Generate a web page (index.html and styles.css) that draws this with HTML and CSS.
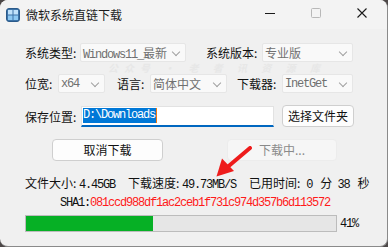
FILE: index.html
```html
<!DOCTYPE html>
<html lang="zh-CN">
<head>
<meta charset="utf-8">
<title>微软系统直链下载</title>
<link rel="stylesheet" href="styles.css">
</head>
<body>
<div class="window">
  <div class="titlebar">
    <svg class="appicon" width="14" height="14" viewBox="0 0 14 14">
      <rect x="0.5" y="0.5" width="13" height="13" rx="2.5" fill="#3c73a8" stroke="#2b5a8a"/>
      <rect x="2" y="2" width="4.5" height="4.5" fill="#bfe1fb"/>
      <rect x="7.5" y="2" width="4.5" height="4.5" fill="#bfe1fb"/>
      <rect x="2" y="7.5" width="4.5" height="4.5" fill="#8cc8f3"/>
      <rect x="7.5" y="7.5" width="4.5" height="4.5" fill="#8cc8f3"/>
    </svg>
    <span class="title">微软系统直链下载</span>
    <div class="controls">
      <svg class="ctl" width="46" height="29" viewBox="0 0 46 29"><path d="M18 13.5h10" stroke="#1a1a1a" stroke-width="1"/></svg>
      <svg class="ctl" width="46" height="29" viewBox="0 0 46 29"><rect x="18.5" y="8.5" width="9" height="9" rx="1" fill="none" stroke="#b8b8b8"/></svg>
      <svg class="ctl" width="46" height="29" viewBox="0 0 46 29"><path d="M18.5 8.5l9 9M27.5 8.5l-9 9" stroke="#1a1a1a" stroke-width="1.1"/></svg>
    </div>
  </div>
  <div class="content">
    <div class="watermark">公众号 · 老 者 讯 资 源 库</div>
    <div class="row r1">
      <span class="lbl w55">系统类型:</span>
      <div class="combo w106"><span><span class="mono">Windows11_</span>最新</span><i class="chev"></i></div>
      <span class="lbl w56 ml20">系统版本:</span>
      <div class="combo w91"><span>专业版</span><i class="chev"></i></div>
    </div>
    <div class="row r2">
      <span class="lbl w33">位宽:</span>
      <div class="combo w47"><span class="mono">x64</span><i class="chev"></i></div>
      <span class="lbl w33 ml12">语言:</span>
      <div class="combo w77"><span>简体中文</span><i class="chev"></i></div>
      <span class="lbl w45 ml10">下载器:</span>
      <div class="combo w71"><span class="mono">InetGet</span><i class="chev"></i></div>
    </div>
    <div class="row r3">
      <span class="lbl w56">保存位置:</span>
      <div class="input"><span class="sel mono">D:\Downloads</span><span class="caret"></span></div>
      <button class="btn pick">选择文件夹</button>
    </div>
    <div class="row r4">
      <button class="btn cancel">取消下载</button>
      <button class="btn busy" disabled>下载中...</button>
    </div>
    <div class="row info">
      <span class="w103">文件大小: <span class="mono">4.45GB</span></span>
      <span class="w121">下载速度: <span class="mono">49.73MB/S</span></span>
      <span>已用时间:<span class="mono num0">0</span><span class="unit">分</span><span class="mono num1">38</span><span class="unit">秒</span></span>
    </div>
    <div class="row sha">
      <span class="mono">SHA1:</span><span class="mono hash">081ccd988df1ac2ceb1f731c974d357b6d113572</span>
    </div>
    <div class="row prog">
      <div class="bar"><div class="fill" style="width:41%"></div></div>
      <span class="pct mono">41%</span>
    </div>
    <svg class="arrow" width="40" height="36" viewBox="0 0 40 36">
      <path d="M36 2 L10 24" stroke="#ee1c1c" stroke-width="4" stroke-linecap="round"/>
      <path d="M2.5 30.5 L8 12.5 L20 25 Z" fill="#ee1c1c"/>
    </svg>
  </div>
</div>
</body>
</html>
```
FILE: styles.css
```css
html, body {
  margin: 0;
  padding: 0;
}
body {
  width: 388px;
  height: 247px;
  background: #4d4848;
  overflow: hidden;
  font-family: "Noto Sans CJK SC", "Liberation Sans", sans-serif;
  font-size: 12px;
  color: #111;
}
.window {
  width: 387px;
  height: 246px;
  background: #f0f0f0;
  border-radius: 8px;
  overflow: hidden;
  position: relative;
  border-right: 1px solid #8a8a8a;
  border-bottom: 1px solid #8a8a8a;
}
.titlebar {
  height: 29px;
  background: #f3f3f3;
  display: flex;
  align-items: center;
}
.appicon {
  margin-left: 6px;
  margin-top: 1px;
}
.title {
  margin-left: 6px;
  font-size: 12px;
  color: #1b1b1b;
  line-height: 1;
}
.controls {
  margin-left: auto;
  display: flex;
  margin-right: 2px;
}
.ctl {
  display: block;
}
.content {
  position: relative;
  padding-left: 25px;
  padding-top: 14px;
}
.watermark {
  position: absolute;
  left: 108px;
  top: 34px;
  height: 10px;
  font-size: 10px;
  line-height: 10px;
  font-weight: bold;
  font-style: italic;
  color: #e7e7e7;
  letter-spacing: 6px;
  white-space: nowrap;
  z-index: 0;
}
.row {
  display: flex;
  align-items: center;
  position: relative;
  white-space: nowrap;
  z-index: 1;
}
.r1 { height: 19px; }
.r2 { height: 19px; margin-top: 12px; }
.r3 { height: 22px; margin-top: 12px; }
.r4 { height: 22px; margin-top: 12px; }
.info { height: 16px; margin-top: 14px; }
.sha { height: 14px; margin-top: 5px; padding-left: 35px; }
.prog { height: 17px; margin-top: 5px; }
.lbl {
  display: inline-block;
  line-height: 19px;
}
.mono {
  font-family: "Liberation Mono", "DejaVu Sans Mono", monospace;
  letter-spacing: -1.2px;
}
.num0 { margin-left: 6px; }
.unit { margin-left: 8px; }
.num1 { margin-left: 5px; }
.w33 { width: 33px; }
.w45 { width: 45px; }
.w55 { width: 55px; }
.w56 { width: 56px; }
.w103 { width: 103px; display: inline-block; }
.w121 { width: 121px; display: inline-block; }
.w47 { width: 47px; }
.w71 { width: 71px; }
.w77 { width: 77px; }
.w91 { width: 91px; }
.w106 { width: 106px; }
.ml10 { margin-left: 10px; }
.ml12 { margin-left: 12px; }
.ml20 { margin-left: 20px; }
.combo {
  box-sizing: border-box;
  height: 19px;
  border: 1px solid #e6e6e6;
  background: #f9f9f9;
  border-radius: 2px;
  color: #707070;
  display: flex;
  align-items: center;
  padding-left: 2px;
  position: relative;
}
.chev {
  position: absolute;
  right: 6px;
  top: 5px;
  width: 5px;
  height: 5px;
  border-right: 1px solid #a0a0a0;
  border-bottom: 1px solid #a0a0a0;
  transform: rotate(45deg);
}
.input {
  box-sizing: border-box;
  width: 193px;
  height: 21px;
  background: #fff;
  border: 1px solid #e2e2e2;
  border-bottom: 2px solid #0067c0;
  display: flex;
  align-items: center;
  padding-left: 1px;
}
.sel {
  background: #0078d7;
  color: #fff;
  line-height: 15px;
  padding-right: 1px;
}
.caret {
  width: 1px;
  height: 15px;
  background: #f07a10;
}
.btn {
  box-sizing: border-box;
  height: 22px;
  font-family: "Noto Sans CJK SC", "Liberation Sans", sans-serif;
  font-size: 12px;
  color: #111;
  background: #fdfdfd;
  border: 1px solid #cfcfcf;
  border-radius: 4px;
  padding: 0;
  line-height: 1;
}
.pick {
  width: 72px;
  margin-left: 8px;
}
.cancel {
  width: 111px;
  margin-left: 27px;
}
.busy {
  width: 110px;
  margin-left: 64px;
  background: #f6f6f6;
  border-color: #ececec;
  color: #8a8a8a;
}
.hash {
  color: #ff1a1a;
}
.bar {
  box-sizing: border-box;
  width: 312px;
  height: 17px;
  background: #e6e6e6;
  border: 1px solid #bcbcbc;
}
.fill {
  height: 100%;
  background: #06b025;
}
.pct {
  margin-left: 3px;
}
.arrow {
  position: absolute;
  left: 214px;
  top: 117px;
  z-index: 2;
}
```
